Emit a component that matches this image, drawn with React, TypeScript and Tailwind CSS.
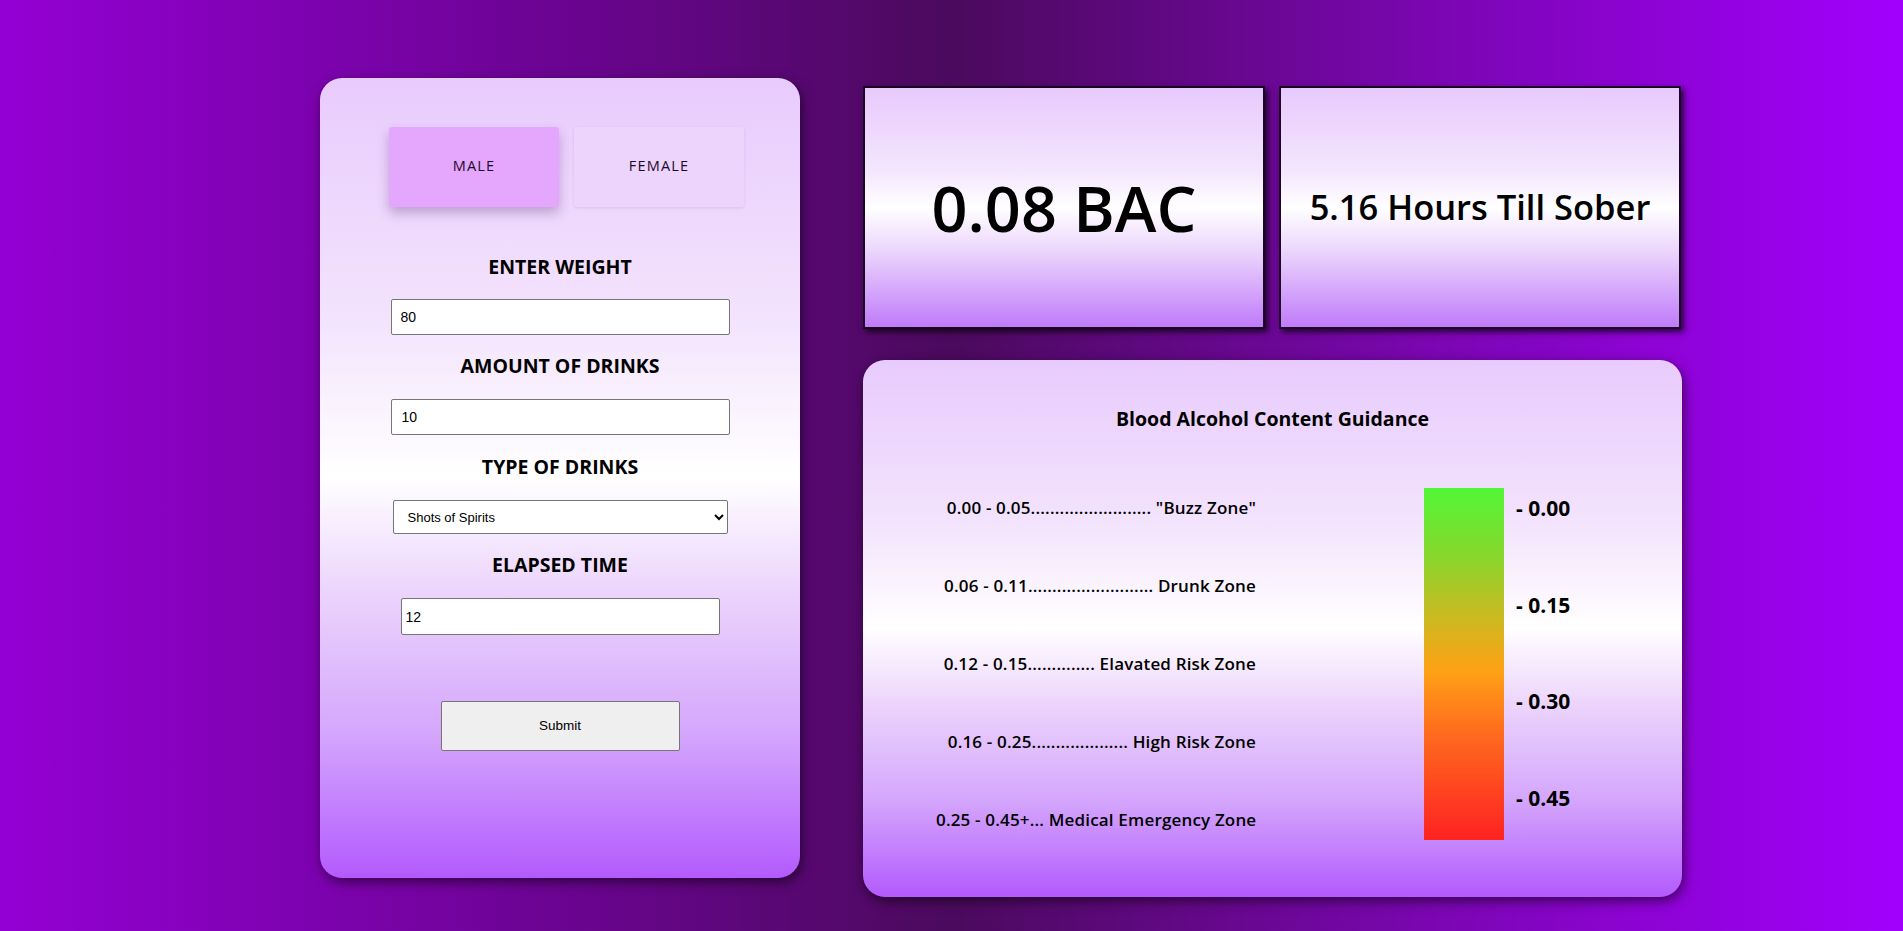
import React from 'react';

const ZONES = [
    '0.00 - 0.05......................... "Buzz Zone"',
    '0.06 - 0.11.......................... Drunk Zone',
    '0.12 - 0.15.............. Elavated Risk Zone',
    '0.16 - 0.25.................... High Risk Zone',
    '0.25 - 0.45+... Medical Emergency Zone',
];

const TICKS = ['- 0.00', '- 0.15', '- 0.30', '- 0.45'];

const panelBg =
    'bg-[linear-gradient(to_bottom,#e8cbfd_0%,#f3e3fd_30%,#ffffff_50%,#ebd2fc_65%,#d4a6fc_82%,#b35afd_100%)]';

const Label = ({ children }: { children: React.ReactNode }) => (
    <h3 className="h-6 text-center font-['Open_Sans',sans-serif] text-[19.5px] font-bold leading-6 text-black">
        {children}
    </h3>
);

const inputCls =
    "h-[36px] rounded-[2px] border border-[#767676] bg-white font-['Liberation_Sans',Arial,sans-serif] text-[14px] text-black outline-none";

const App: React.FC = () => {
    const [sex, setSex] = React.useState<'male' | 'female'>('male');

    return (
        <div className="min-h-[931px] w-full bg-[linear-gradient(to_right,#9400d4_0%,#6a0490_30%,#4b0a5d_50%,#7a06b0_75%,#a200fd_100%)] font-['Open_Sans',sans-serif]">
            <div className="flex items-start gap-[63px] pl-[320px] pt-[78px]">
                {/* form panel */}
                <div className={`flex h-[800px] w-[480px] flex-col items-center rounded-[22px] ${panelBg} shadow-[2px_4px_12px_rgba(0,0,0,0.55)]`}>
                    <div className="ml-[13px] mt-[49px] flex gap-[15px]">
                        <button
                            onClick={() => setSex('male')}
                            className={`h-[80px] w-[170px] rounded-[3px] pb-[3px] text-[14.5px] font-medium tracking-[0.08em] text-[#1c0a28] ${
                                sex === 'male'
                                    ? 'bg-[#e4a7fd] shadow-[0_6px_12px_rgba(80,30,110,0.3)]'
                                    : 'bg-[#ecd4fd] shadow-[0_1px_3px_rgba(80,30,110,0.12)]'
                            }`}
                        >
                            MALE
                        </button>
                        <button
                            onClick={() => setSex('female')}
                            className={`h-[80px] w-[170px] rounded-[3px] pb-[3px] text-[14.5px] font-medium tracking-[0.08em] text-[#1c0a28] ${
                                sex === 'female'
                                    ? 'bg-[#e4a7fd] shadow-[0_6px_12px_rgba(80,30,110,0.3)]'
                                    : 'bg-[#ecd4fd] shadow-[0_1px_3px_rgba(80,30,110,0.12)]'
                            }`}
                        >
                            FEMALE
                        </button>
                    </div>

                    <div className="mt-[48px]">
                        <Label>ENTER WEIGHT</Label>
                    </div>
                    <input defaultValue="80" className={`${inputCls} mt-[20px] w-[339px] pl-[9px]`} />

                    <div className="mt-[19px]">
                        <Label>AMOUNT OF DRINKS</Label>
                    </div>
                    <input defaultValue="10" className={`${inputCls} mt-[21px] w-[339px] pl-[10px]`} />

                    <div className="mt-[20px]">
                        <Label>TYPE OF DRINKS</Label>
                    </div>
                    <select
                        defaultValue="shots"
                        className="mt-[21px] h-[34px] w-[335px] rounded-[2px] border border-[#767676] bg-white pl-[10px] font-['Liberation_Sans',Arial,sans-serif] text-[13px] text-black"
                    >
                        <option value="shots">Shots of Spirits</option>
                        <option value="beer">Beer</option>
                        <option value="wine">Glass of Wine</option>
                    </select>

                    <div className="mt-[19px]">
                        <Label>ELAPSED TIME</Label>
                    </div>
                    <input defaultValue="12" className={`${inputCls} mt-[21px] h-[37px] w-[319px] pl-[4px]`} />

                    <button className="mt-[66px] h-[50px] w-[239px] rounded-[2px] border border-[#767676] bg-[#efefef] font-['Liberation_Sans',Arial,sans-serif] text-[13.5px] text-black">
                        Submit
                    </button>
                </div>

                {/* results */}
                <div className="flex w-[819px] flex-col">
                    <div className="mt-[8px] flex gap-[14px]">
                        <div className="flex h-[243px] w-[402px] items-center justify-center border-2 border-[#1a0622] bg-[linear-gradient(to_bottom,#e7cafd_0%,#f4e6fd_35%,#ffffff_50%,#ecd6fc_68%,#c07bfa_100%)] shadow-[3px_3px_6px_rgba(0,0,0,0.7)]">
                            <span className="text-[63px] font-semibold leading-none text-black">0.08 BAC</span>
                        </div>
                        <div className="flex h-[243px] w-[402px] items-center justify-center border-2 border-[#1a0622] bg-[linear-gradient(to_bottom,#e7cafd_0%,#f4e6fd_35%,#ffffff_50%,#ecd6fc_68%,#c07bfa_100%)] shadow-[3px_3px_6px_rgba(0,0,0,0.7)]">
                            <span className="text-[34.5px] font-semibold leading-none text-black">5.16 Hours Till Sober</span>
                        </div>
                    </div>

                    <div className={`mt-[31px] flex h-[537px] w-[819px] flex-col rounded-[22px] ${panelBg} shadow-[2px_4px_12px_rgba(0,0,0,0.55)]`}>
                        <h2 className="mt-[47px] h-6 text-center text-[19.5px] font-bold leading-6 text-black">
                            Blood Alcohol Content Guidance
                        </h2>

                        <div className="mt-[57px] flex">
                            <div className="ml-[73px] mt-[8px] flex w-[320px] flex-col gap-[54px]">
                                {ZONES.map((z) => (
                                    <p key={z} className="h-6 whitespace-nowrap text-right text-[17px] font-semibold leading-6 tracking-[0.01em] text-black">
                                        {z}
                                    </p>
                                ))}
                            </div>

                            <div className="ml-[168px] h-[352px] w-[80px] bg-[linear-gradient(to_bottom,#52f637_0%,#8ad52b_20%,#c8bb21_36%,#ffa116_52%,#ff6a1e_70%,#ff2222_100%)]" />

                            <div className="ml-[12px] mt-[8px] flex flex-col gap-[72.5px]">
                                {TICKS.map((t) => (
                                    <span key={t} className="h-6 text-[21px] font-bold leading-6 text-black">
                                        {t}
                                    </span>
                                ))}
                            </div>
                        </div>
                    </div>
                </div>
            </div>
        </div>
    );
};

export default App;
